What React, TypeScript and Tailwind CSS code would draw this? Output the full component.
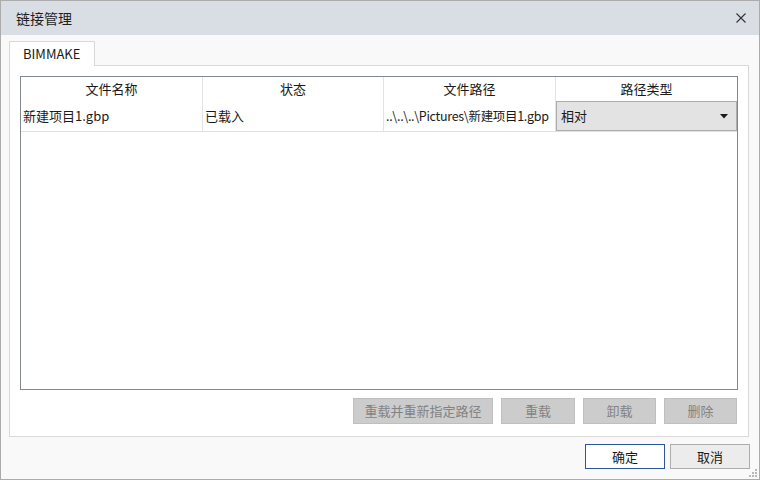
import React from 'react'

const font = { fontFamily: '"Noto Sans CJK SC", "Noto Sans", sans-serif' }

const columns = [
  { title: '文件名称', w: 'w-[182px]' },
  { title: '状态', w: 'w-[181px]' },
  { title: '文件路径', w: 'w-[172px]' },
  { title: '路径类型', w: 'w-[181px]' },
]

function DisabledButton({ label, w }: { label: string; w: string }) {
  return (
    <button
      disabled
      className={`${w} h-[26px] border border-[#bfbfbf] bg-[#cccccc] text-[13px] text-[#838383] flex items-center justify-center`}
    >
      {label}
    </button>
  )
}

function ResizeGrip() {
  // little dotted triangle in the bottom right corner
  const dots = [
    [6, 0],
    [3, 3], [6, 3],
    [0, 6], [3, 6], [6, 6],
  ]
  return (
    <svg width="8" height="8" viewBox="0 0 8 8" className="absolute right-[2px] bottom-[2px]">
      {dots.map(([x, y], i) => (
        <rect key={i} x={x} y={y} width="2" height="2" fill="#b8b8b8" />
      ))}
    </svg>
  )
}

export default function App() {
  return (
    <div
      className="relative w-[760px] h-[480px] border border-[#ababab] flex flex-col bg-[#f9f9f9] text-[#1a1a1a]"
      style={font}
    >
      {/* title bar */}
      <div className="h-[34px] shrink-0 bg-[#d9dde4] flex items-center justify-between pl-[15px] pr-[13px]">
        <span className="text-[14px] text-[#1f1f1f]">链接管理</span>
        <svg width="10" height="10" viewBox="0 0 10 10">
          <path d="M0.5 0.5 L9.5 9.5 M9.5 0.5 L0.5 9.5" stroke="#333" strokeWidth="1.1" />
        </svg>
      </div>

      <div className="flex-1 flex flex-col pt-[6px] pl-[8px] pr-[9px]">
        {/* tab */}
        <div className="relative z-10 -mb-px w-[86px] h-[25px] border border-b-0 border-[#d9d9d9] bg-white flex items-center pl-[13px] text-[13px] text-[#1a1a1a]">
          BIMMAKE
        </div>

        {/* tab panel */}
        <div className="w-[740px] h-[372px] border border-[#d9d9d9] bg-white pt-[10px] px-[10px] flex flex-col">
          {/* grid */}
          <div className="h-[314px] border border-[#828790] flex flex-col">
            <div className="flex h-[24px] shrink-0">
              {columns.map((c, i) => (
                <div
                  key={c.title}
                  className={`${c.w} flex items-center justify-center text-[13px] ${i < 3 ? 'border-r border-[#e3e3e3]' : ''}`}
                >
                  {c.title}
                </div>
              ))}
            </div>
            <div className="flex h-[31px] shrink-0 border-b border-[#e0e0e0] text-[13px]">
              <div className="w-[182px] border-r border-[#e3e3e3] flex items-center pl-[2px] whitespace-nowrap">
                新建项目1.gbp
              </div>
              <div className="w-[181px] border-r border-[#e3e3e3] flex items-center pl-[2px]">
                已载入
              </div>
              <div className="w-[172px] border-r border-[#e3e3e3] flex items-center pl-[2px] whitespace-nowrap overflow-hidden text-[12.5px] tracking-[-0.3px]">
                ..\..\..\Pictures\新建项目1.gbp
              </div>
              <div className="w-[181px] flex items-center">
                <div className="w-[181px] h-[30px] border border-[#acacac] bg-[#e3e3e3] flex items-center justify-between pl-[4px] pr-[8px]">
                  <span>相对</span>
                  <svg width="8" height="5" viewBox="0 0 8 5">
                    <path d="M0 0 H8 L4 4.5 Z" fill="#1a1a1a" />
                  </svg>
                </div>
              </div>
            </div>
          </div>

          {/* action buttons */}
          <div className="flex justify-end gap-[8px] mt-[8px] pr-[1px]">
            <DisabledButton label="重载并重新指定路径" w="w-[140px]" />
            <DisabledButton label="重载" w="w-[74px]" />
            <DisabledButton label="卸载" w="w-[73px]" />
            <DisabledButton label="删除" w="w-[73px]" />
          </div>
        </div>

        {/* dialog buttons */}
        <div className="flex justify-end gap-[5px] mt-[7px]">
          <button className="w-[80px] h-[25px] border border-[#2b579a] bg-white text-[13px] text-[#1a1a1a] flex items-center justify-center">
            确定
          </button>
          <button className="w-[80px] h-[25px] border border-[#adadad] bg-[#ececec] text-[13px] text-[#1a1a1a] flex items-center justify-center">
            取消
          </button>
        </div>
      </div>
      <ResizeGrip />
    </div>
  )
}
